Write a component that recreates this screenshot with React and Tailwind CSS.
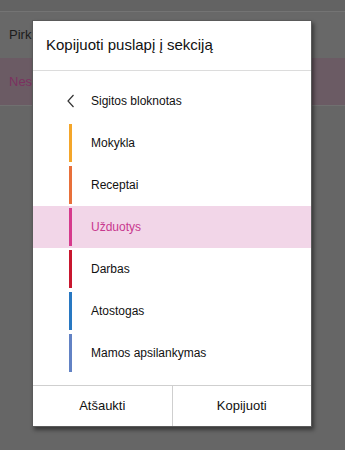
import React from "react";

const sections = [
    { name: "Mokykla", color: "bg-[#f4a62a]" },
    { name: "Receptai", color: "bg-[#e8703a]" },
    { name: "Užduotys", color: "bg-[#d63a8c]", active: true },
    { name: "Darbas", color: "bg-[#c8172f]" },
    { name: "Atostogas", color: "bg-[#2878c2]" },
    { name: "Mamos apsilankymas", color: "bg-[#6282c4]" },
];

const App = () => {
    return (
        <div className="relative w-[345px] h-[450px] overflow-hidden bg-[#666666] font-[family-name:Liberation_Sans,Arial,sans-serif]">
            {/* page behind the dim overlay, only the left edge shows */}
            <div className="h-[12px] border-b border-[#747474] bg-[#636363]" />
            <div className="h-[46px] flex items-center bg-[#686868]">
                <div className="w-[32px] pl-[9px] overflow-hidden whitespace-nowrap text-[13px] text-[#1c1c1c]">Pirkiniai</div>
            </div>
            <div className="h-[48px] flex items-center bg-[#6b5b64] border-b border-[#707070]">
                <div className="w-[32px] pl-[9px] overflow-hidden whitespace-nowrap text-[13px] text-[#7c3160]">Nesutvarkyta</div>
            </div>

            {/* dialog */}
            <div className="absolute left-[32px] top-[20px] w-[280px] h-[407px] flex flex-col bg-white border border-[#5a5a5a] shadow-[2px_3px_4px_rgba(0,0,0,0.45)]">
                <div className="h-[50px] flex items-center pl-[13px] text-[15px] text-[#111] border-b border-[#dcdcdc]">
                    Kopijuoti puslapį į sekciją
                </div>

                <div className="flex-1 flex flex-col">
                    <div className="h-[51px] flex items-center pt-[9px] pl-[34px] text-[12px] text-[#111]">
                        <svg width="8" height="14" viewBox="0 0 8 14" fill="none" stroke="#333" strokeWidth="1.2">
                            <polyline points="6.5,1 1,7 6.5,13" />
                        </svg>
                        <span className="ml-[16px]">Sigitos bloknotas</span>
                    </div>
                    {sections.map((s) => (
                        <div
                            key={s.name}
                            className={`h-[42px] flex items-center ${s.active ? "bg-[#f2d6e8]" : ""}`}
                        >
                            <div className={`ml-[36px] w-[3px] h-[38px] ${s.color}`} />
                            <span className={`ml-[19px] text-[12px] ${s.active ? "text-[#c8388e]" : "text-[#111]"}`}>
                                {s.name}
                            </span>
                        </div>
                    ))}
                </div>

                <div className="h-[41px] flex border-t border-[#cfcfcf] text-[13px] text-[#111]">
                    <button className="flex-1 flex items-center justify-center border-r border-[#cfcfcf]">Atšaukti</button>
                    <button className="flex-1 flex items-center justify-center">Kopijuoti</button>
                </div>
            </div>
        </div>
    );
};

export default App;
